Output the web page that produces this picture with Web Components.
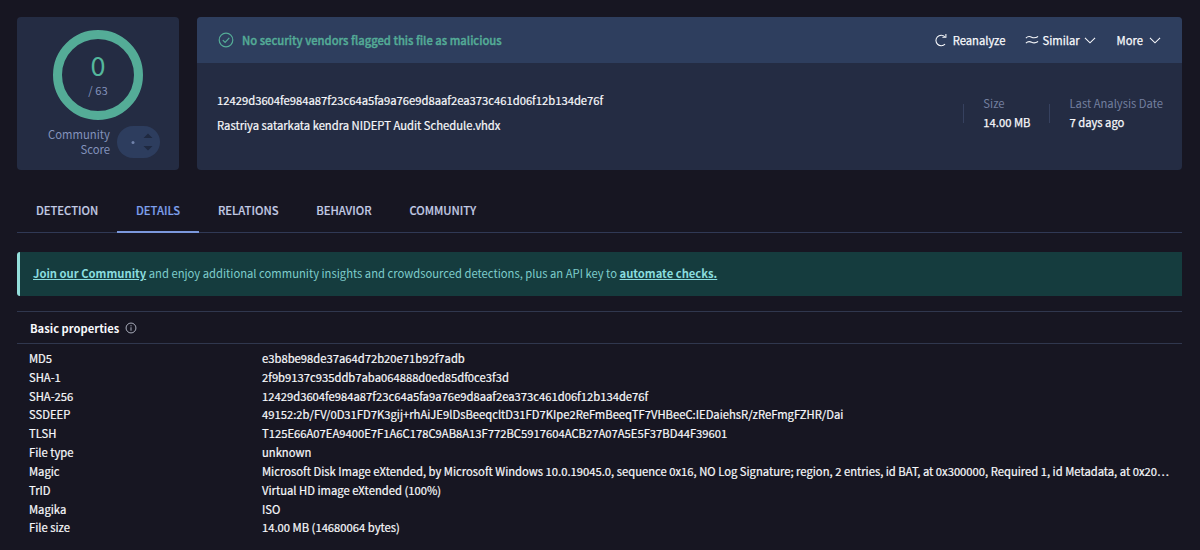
<!DOCTYPE html>
<html lang="en">
<head>
<meta charset="utf-8">
<title>File report</title>
<style>
    html, body {
        margin: 0;
        height: 100%;
        overflow: hidden;
        background: #171622;
    }
    body {
        font-family: "Noto Sans CJK SC", "Noto Sans CJK JP", "Open Sans", sans-serif;
        font-size: 11.24px;
        color: #f8f9fc;
    }
</style>
</head>
<body>
<file-report></file-report>

<script>
    // Base class: puts css and html in an open shadow root
    class BaseElement extends HTMLElement {
        render(css, html) {
            this.attachShadow({ mode: 'open' });
            const template = document.createElement('template');
            template.innerHTML = `<style>*{box-sizing:border-box}${css}</style>${html}`;
            this.shadowRoot.appendChild(template.content.cloneNode(true));
        }
    }

    // Line icons
    const icons = {
        check: '<circle cx="8" cy="8" r="6.8"/><path d="M4.8 8.2l2.3 2.3 4.2-4.6"/>',
        reload: '<path d="M12.6 12.6A6 6 0 1 1 12.400 4.200"/><path d="M9.6 4.8h4V1.2"/>',
        similar: '<path d="M1 5.8c2.2-2.2 4.2-2.2 6.6-1s4.4 1 7.4-.8"/><path d="M1 11.6c2.2-2.2 4.2-2.2 6.6-1s4.4 1 7.4-.8"/>',
        chevron: '<path d="M2.2 5.5L8 11.2l5.8-5.7"/>',
        info: '<circle cx="8" cy="8" r="6.6"/><path d="M8 7v4.6M8 4.3v1.5"/>'
    };

    class LineIcon extends BaseElement {
        connectedCallback() {
            this.render(`
                :host { display: block; flex: none; width: 16px; height: 16px; }
                svg { display: block; width: 100%; height: 100%; fill: none; stroke: currentColor; stroke-width: 1.2; }
            `, `<svg viewBox="0 0 16 16">${icons[this.getAttribute('name')]}</svg>`);
        }
    }

    // Detection ratio ring and community score
    class ScoreCard extends BaseElement {
        connectedCallback() {
            this.render(`
                :host {
                    display: flex;
                    flex-direction: column;
                    align-items: center;
                    width: 162px;
                    height: 153px;
                    padding-top: 13px;
                    border-radius: 4px;
                    background: #242c43;
                    color: #8392bb;
                    box-sizing: border-box;
                    flex: none;
                }
                .ring {
                    width: 90px;
                    height: 90px;
                    border: 9px solid #54ac97;
                    border-radius: 50%;
                    display: flex;
                    flex-direction: column;
                    align-items: center;
                    padding-top: 11px;
                }
                .hits { font-size: 27px; line-height: 30px; color: #54b79c; }
                .total { line-height: 16px; margin-top: 2px; }
                .community { display: flex; align-items: center; align-self: stretch; margin-top: 6px; padding-left: 31px; gap: 7px; }
                .label { width: 62px; text-align: right; line-height: 15.5px; font-size: 11.3px; }
                .pill {
                    width: 43px;
                    height: 32px;
                    border-radius: 16px;
                    background: #2d3d5e;
                }
                svg { display: block; }
            `, `
                <div class="ring">
                    <div class="hits">0</div>
                    <div class="total">/ 63</div>
                </div>
                <div class="community">
                    <div class="label">Community Score</div>
                    <div class="pill">
                        <svg width="43" height="32">
                            <circle cx="16" cy="16.5" r="1.5" fill="#7183ab"/>
                            <path d="M26.5 12L31 7.5l4.5 4.5zM26.5 20L31 24.5l4.5-4.5z" fill="#1f2940"/>
                        </svg>
                    </div>
                </div>
            `);
        }
    }

    // A labelled value with a rule at its left
    class FileStat extends BaseElement {
        connectedCallback() {
            this.render(`
                :host { display: flex; align-items: center; white-space: nowrap; }
                .rule { width: 1px; height: 19px; background: #36415f; margin-right: 19px; }
                .label { color: #737f9f; line-height: 19px; }
                .value { line-height: 19px; -webkit-text-stroke: .25px; }
            `, `
                <div class="rule"></div>
                <div>
                    <div class="label">${this.getAttribute('label')}</div>
                    <div class="value"><slot></slot></div>
                </div>
            `);
        }
    }

    class FileCard extends BaseElement {
        connectedCallback() {
            this.render(`
                :host { display: block; flex: 1; height: 153px; border-radius: 4px; overflow: hidden; background: #242c43; white-space: nowrap; }
                header { display: flex; align-items: center; height: 46px; padding: 0 20px 0 21px; background: #2e3e5e; }
                .verdict { flex: 1; display: flex; align-items: center; gap: 8px; color: #54ac97; font-weight: 500; }
                .verdict span { -webkit-text-stroke: .35px; }
                .action { display: flex; align-items: center; -webkit-text-stroke: .25px; }
                .action line-icon { width: 14px; height: 14px; }
                .body { display: flex; align-items: flex-start; justify-content: space-between; padding: 25px 19px 0 20px; }
                .names { line-height: 25.4px; -webkit-text-stroke: .2px; }
                .stats { display: flex; gap: 19px; padding-top: 6px; }
            `, `
                <header>
                    <div class="verdict"><line-icon name="check"></line-icon><span>No security vendors flagged this file as malicious</span></div>
                    <div class="action" style="gap:5px"><line-icon name="reload"></line-icon><span>Reanalyze</span></div>
                    <div class="action" style="gap:3px;margin-left:20px"><line-icon name="similar"></line-icon><span>Similar</span><line-icon name="chevron"></line-icon></div>
                    <div class="action" style="gap:5px;margin-left:20px"><span>More</span><line-icon name="chevron"></line-icon></div>
                </header>
                <div class="body">
                    <div class="names">
                        <div>12429d3604fe984a87f23c64a5fa9a76e9d8aaf2ea373c461d06f12b134de76f</div>
                        <div>Rastriya satarkata kendra NIDEPT Audit Schedule.vhdx</div>
                    </div>
                    <div class="stats">
                        <file-stat label="Size">14.00 MB</file-stat>
                        <file-stat label="Last Analysis Date">7 days ago</file-stat>
                    </div>
                </div>
            `);
        }
    }

    class TabBar extends BaseElement {
        connectedCallback() {
            this.render(`
                :host { display: flex; height: 45px; border-bottom: 1px solid #303955; box-sizing: border-box; }
                .tab { height: 45px; padding: 0 18.9px; line-height: 45px; font-weight: 500; color: #c3cbe4; -webkit-text-stroke: .15px; }
                .tab.active { color: #7fa1ec; border-bottom: 2px solid #7b98dd; }
            `, this.getAttribute('tabs').split(',').map(tab =>
                `<div class="tab${tab === this.getAttribute('active') ? ' active' : ''}">${tab}</div>`
            ).join(''));
        }
    }

    class JoinBanner extends BaseElement {
        connectedCallback() {
            this.render(`
                :host { display: block; height: 44px; padding-left: 13px; border-left: 3px solid #94dedb; border-radius: 3px 0 0 3px; background: #153c3e; color: #7ecdcc; line-height: 43px; box-sizing: border-box; white-space: nowrap; }
                b { color: #8adcdf; text-decoration: underline; font-weight: 700; }
            `, `<b>Join our Community</b> and enjoy additional community insights and crowdsourced detections, plus an API key to <b>automate checks.</b>`);
        }
    }

    const properties = [
        ['MD5', 'e3b8be98de37a64d72b20e71b92f7adb'],
        ['SHA-1', '2f9b9137c935ddb7aba064888d0ed85df0ce3f3d'],
        ['SHA-256', '12429d3604fe984a87f23c64a5fa9a76e9d8aaf2ea373c461d06f12b134de76f'],
        ['SSDEEP', '49152:2b/FV/0D31FD7K3gij+rhAiJE9lDsBeeqcltD31FD7KIpe2ReFmBeeqTF7VHBeeC:IEDaiehsR/zReFmgFZHR/Dai'],
        ['TLSH', 'T125E66A07EA9400E7F1A6C178C9AB8A13F772BC5917604ACB27A07A5E5F37BD44F39601'],
        ['File type', 'unknown'],
        ['Magic', 'Microsoft Disk Image eXtended, by Microsoft Windows 10.0.19045.0, sequence 0x16, NO Log Signature; region, 2 entries, id BAT, at 0x300000, Required 1, id Metadata, at 0x20…'],
        ['TrID', 'Virtual HD image eXtended (100%)'],
        ['Magika', 'ISO'],
        ['File size', '14.00 MB (14680064 bytes)']
    ];

    class PropertyList extends BaseElement {
        connectedCallback() {
            this.render(`
                :host { display: block; }
                h3 { display: flex; align-items: center; gap: 6px; margin: 0; height: 33px; padding-left: 13px; border: 1px solid #30374e; border-width: 1px 0; font-size: 11.2px; font-weight: 700; }
                h3 line-icon { width: 12px; height: 12px; color: #b9bdcc; }
                .rows { padding: 5px 0 0 12px; -webkit-text-stroke: .2px; }
                .row { display: grid; grid-template-columns: 233px 1fr; line-height: 18.82px; white-space: nowrap; }
            `, `
                <h3>Basic properties <line-icon name="info"></line-icon></h3>
                <div class="rows">${properties.map(([name, value]) =>
                    `<div class="row"><span>${name}</span><span>${value}</span></div>`).join('')}</div>
            `);
        }
    }

    class FileReport extends BaseElement {
        connectedCallback() {
            this.render(`
                :host { display: block; padding: 17px 18px 0 17px; }
                .top { display: flex; gap: 18px; }
                tab-bar { margin-top: 18px; }
                join-banner { margin-top: 19px; }
                property-list { margin-top: 15px; }
            `, `
                <div class="top"><score-card></score-card><file-card></file-card></div>
                <tab-bar tabs="DETECTION,DETAILS,RELATIONS,BEHAVIOR,COMMUNITY" active="DETAILS"></tab-bar>
                <join-banner></join-banner>
                <property-list></property-list>
            `);
        }
    }

    customElements.define('line-icon', LineIcon);
    customElements.define('score-card', ScoreCard);
    customElements.define('file-stat', FileStat);
    customElements.define('file-card', FileCard);
    customElements.define('tab-bar', TabBar);
    customElements.define('join-banner', JoinBanner);
    customElements.define('property-list', PropertyList);
    customElements.define('file-report', FileReport);
</script>
</body>
</html>
